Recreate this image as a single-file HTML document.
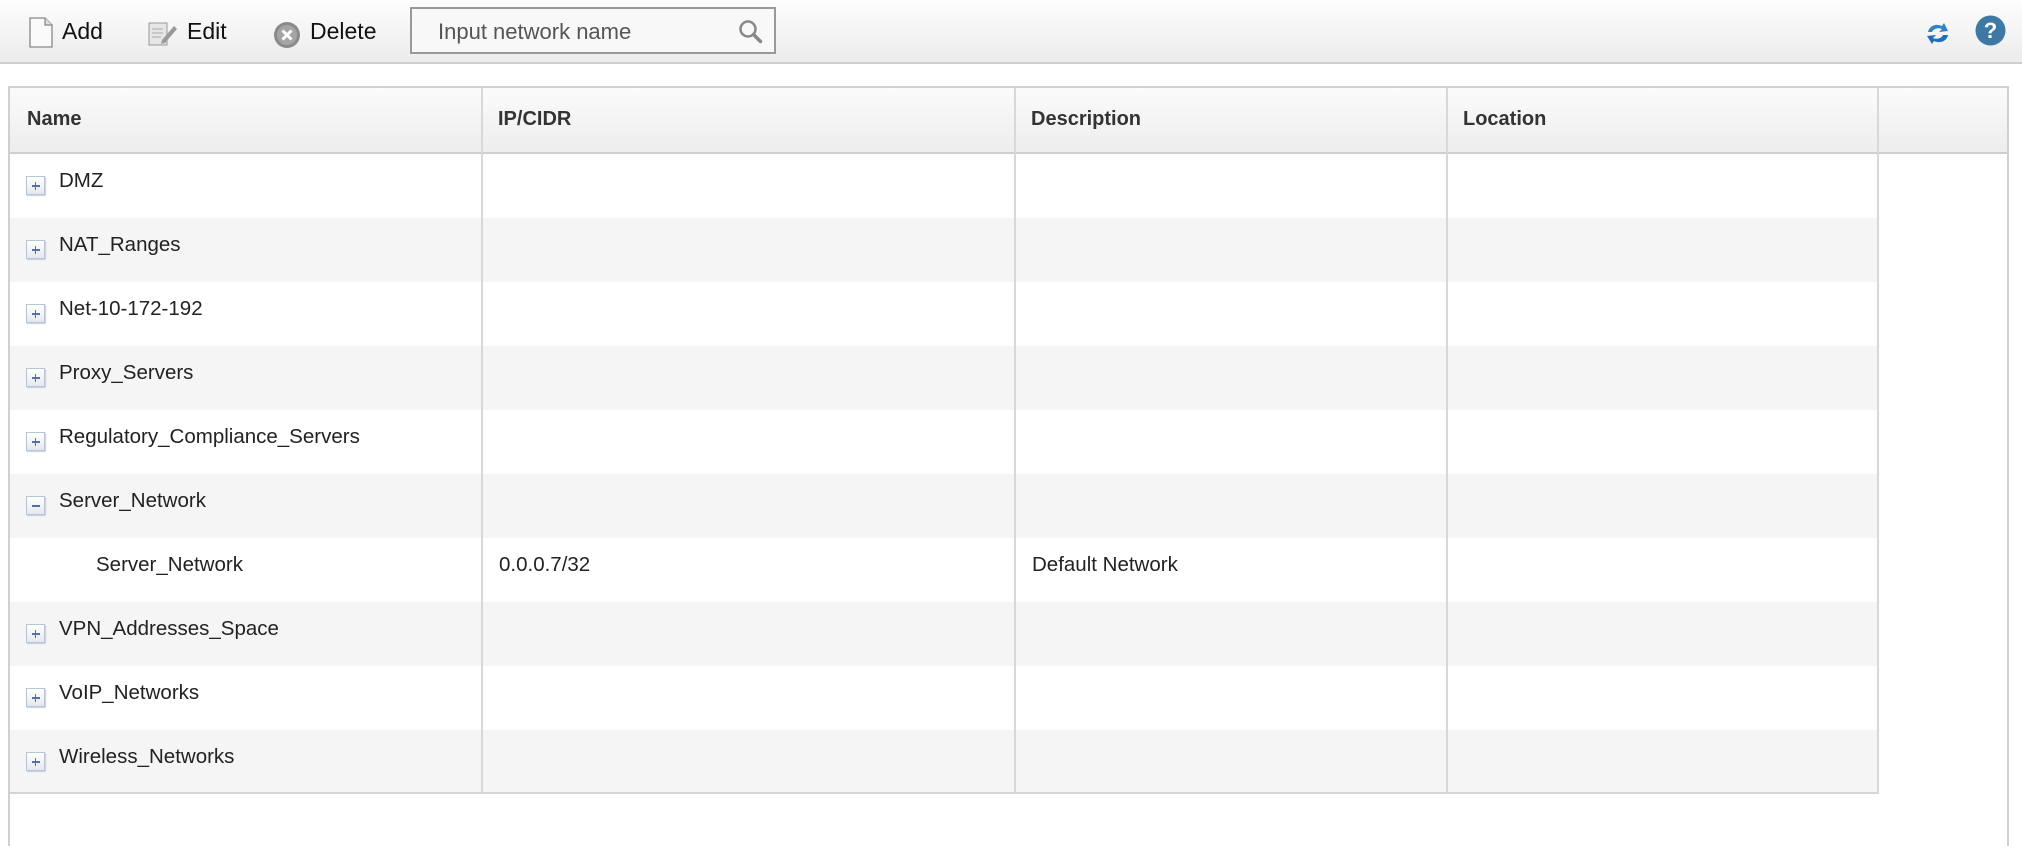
<!DOCTYPE html>
<html><head><style>
body{margin:0;width:2022px;height:830px;background:#fff;font-family:"Liberation Sans",sans-serif;color:#222;position:relative;overflow:hidden}
.tb{position:absolute;left:0;top:0;width:2022px;height:62px;background:linear-gradient(#fdfdfd,#ececec);border-bottom:2px solid #cfcfcf}
.a{position:absolute;font-size:23px;top:18px;color:#111}
.search{position:absolute;left:410px;top:7px;width:366px;height:47px;border:2px solid #999;background:#f8f8f8;box-sizing:border-box}
.search span{position:absolute;left:26px;top:10px;font-size:22px;color:#555}
.tbl{position:absolute;left:8px;top:86px;width:2001px;height:760px;border:2px solid #d0d0d0;border-bottom:none;box-sizing:border-box}
.hd{position:absolute;left:0;top:0;width:1997px;height:64px;background:linear-gradient(#fbfbfb,#ededed);border-bottom:2px solid #cfcfcf}
.hd div{position:absolute;top:20px;font-weight:bold;font-size:20px;color:#333}
.vl{position:absolute;width:2px;background:#d8d8d8}
.row{position:absolute;left:0;width:1868px;height:64px}
.row.g{background:#f5f5f5}
.t{position:absolute;top:15px;font-size:20.5px;color:#222}
.pm{position:absolute;left:16px;top:22px;width:19px;height:19px;border:1px solid #b8c4d4;background:linear-gradient(#fff,#e4e8ef);box-sizing:border-box;box-shadow:1px 1px 1px #ccc}
.pm:before{content:"";position:absolute;left:4.5px;top:8px;width:8px;height:1.5px;background:#5570a0}
.pm.p:after{content:"";position:absolute;left:7.8px;top:4.7px;width:1.5px;height:8px;background:#5570a0}
</style></head><body>
<div class="tb">
<svg style="position:absolute;left:29px;top:17px" width="24" height="31" viewBox="0 0 24 31"><path d="M1 1h15l7 7v22H1z" fill="#fafafa" stroke="#888" stroke-width="1.3"/><path d="M16 1v7h7" fill="#ddd" stroke="#888" stroke-width="1.3"/></svg>
<div class="a" style="left:62px">Add</div>
<svg style="position:absolute;left:148px;top:20px" width="30" height="26" viewBox="0 0 30 26"><rect x="1" y="3" width="18" height="22" fill="#e6e6e6" stroke="#999"/><path d="M4 9h11M4 13h11M4 17h9" stroke="#aaa"/><path d="M14 20l12-14 3 3-12 14-4 1z" fill="#9a9a9a"/></svg>
<div class="a" style="left:187px">Edit</div>
<svg style="position:absolute;left:272px;top:20px" width="30" height="30" viewBox="0 0 30 30"><circle cx="15" cy="15" r="13" fill="#8a8a8a"/><circle cx="15" cy="15" r="10" fill="#a5a5a5"/><path d="M10.5 10.5l9 9M19.5 10.5l-9 9" stroke="#fff" stroke-width="3"/></svg>
<div class="a" style="left:310px">Delete</div>
<div class="search"><span>Input network name</span>
<svg style="position:absolute;left:326px;top:10px" width="26" height="26" viewBox="0 0 26 26"><circle cx="10" cy="10" r="7.5" fill="none" stroke="#888" stroke-width="2.5"/><path d="M15.5 15.5l7 7" stroke="#888" stroke-width="3.5" stroke-linecap="round"/></svg></div>
<svg style="position:absolute;left:1924px;top:20px" width="28" height="28" viewBox="0 0 28 28"><path d="M4 12c1-6 8-9 14-6l2-3 4 8-9 1 3-3c-4-2-9 0-10 3z" fill="#2f82c8"/><path d="M24 15c-1 6-8 9-14 6l-2 3-5-8 9-1-3 3c4 2 9 0 10-3z" fill="#1f6fb8"/></svg>
<svg style="position:absolute;left:1975px;top:15px" width="31" height="31" viewBox="0 0 31 31"><circle cx="15.5" cy="15.5" r="15" fill="#3e79a6"/><text x="15.5" y="23" text-anchor="middle" font-family="Liberation Sans" font-weight="bold" font-size="22" fill="#fff">?</text></svg>
</div>
<div class="tbl">
<div class="hd">
<div style="left:17px">Name</div><div style="left:488px">IP/CIDR</div><div style="left:1021px">Description</div><div style="left:1453px">Location</div>
</div>
<div class="row" style="top:66px"><div class="pm p"></div><div class="t" style="left:49px">DMZ</div></div>
<div class="row g" style="top:130px"><div class="pm p"></div><div class="t" style="left:49px">NAT_Ranges</div></div>
<div class="row" style="top:194px"><div class="pm p"></div><div class="t" style="left:49px">Net-10-172-192</div></div>
<div class="row g" style="top:258px"><div class="pm p"></div><div class="t" style="left:49px">Proxy_Servers</div></div>
<div class="row" style="top:322px"><div class="pm p"></div><div class="t" style="left:49px">Regulatory_Compliance_Servers</div></div>
<div class="row g" style="top:386px"><div class="pm"></div><div class="t" style="left:49px">Server_Network</div></div>
<div class="row" style="top:450px"><div class="t" style="left:86px">Server_Network</div><div class="t" style="left:489px">0.0.0.7/32</div><div class="t" style="left:1022px">Default Network</div></div>
<div class="row g" style="top:514px"><div class="pm p"></div><div class="t" style="left:49px">VPN_Addresses_Space</div></div>
<div class="row" style="top:578px"><div class="pm p"></div><div class="t" style="left:49px">VoIP_Networks</div></div>
<div class="row g" style="top:642px"><div class="pm p"></div><div class="t" style="left:49px">Wireless_Networks</div></div>
<div class="vl" style="left:471px;top:0;height:704px"></div>
<div class="vl" style="left:1004px;top:0;height:704px"></div>
<div class="vl" style="left:1436px;top:0;height:704px"></div>
<div class="vl" style="left:1867px;top:0;height:704px"></div>
<div style="position:absolute;left:0;top:704px;width:1869px;height:2px;background:#d5d5d5"></div>
</div>
</body></html>
